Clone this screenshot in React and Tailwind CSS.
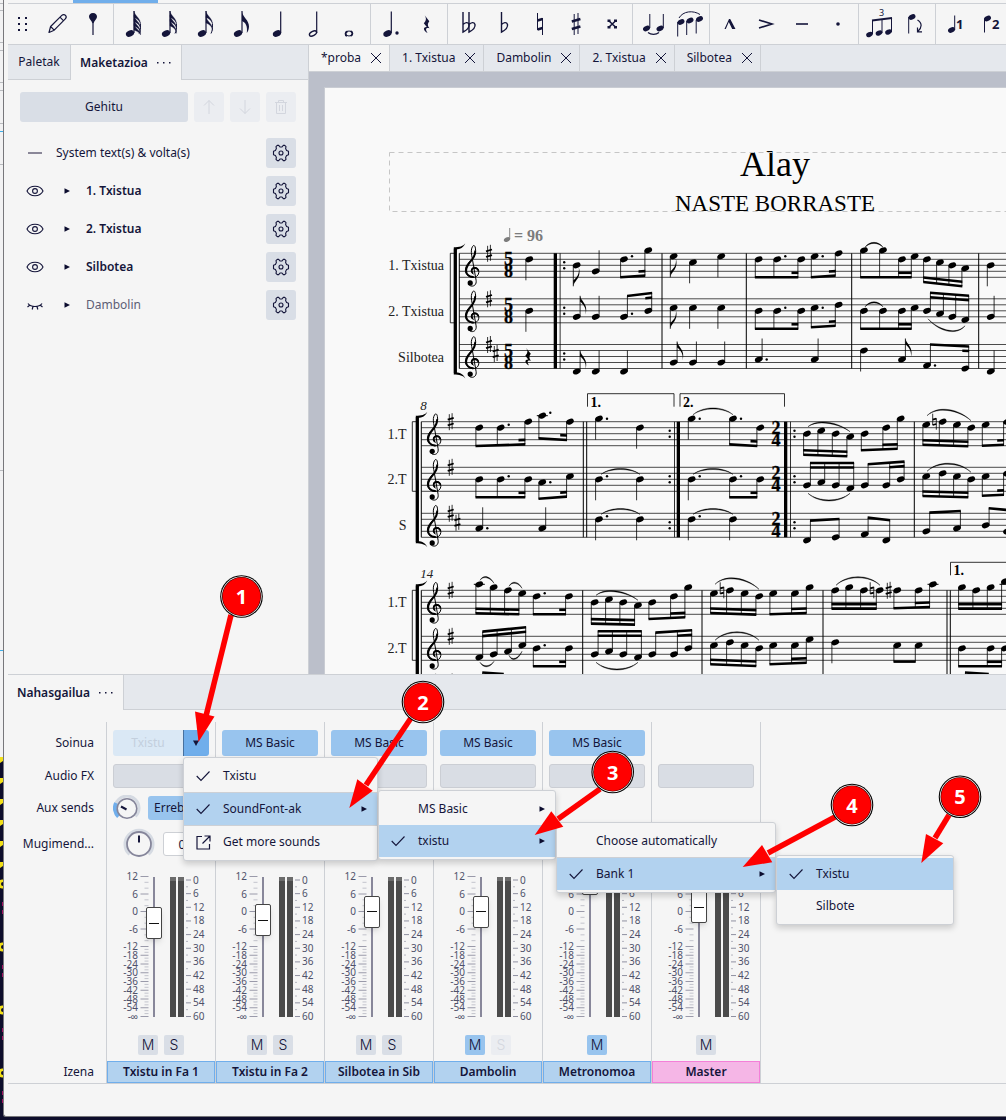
import { useState } from 'react';

const INK = '#14153a';

/* ---------- Toolbar icons (36 x 40 cells) ---------- */

const Head = ({ x, y, s = 1 }) => (
  <ellipse cx={x} cy={y} rx={4.3 * s} ry={3 * s} transform={`rotate(-24 ${x} ${y})`} fill="currentColor" />
);

const Cell = ({ children }) => (
  <svg width="36" height="40" viewBox="0 0 36 40" fill="none" stroke="none" className="block">
    {children}
  </svg>
);

const FlagNote = ({ flags }) => (
  <Cell>
    <Head x={14} y={29.5} />
    <path d="M18 7V29" stroke="currentColor" strokeWidth="1.2" />
    {Array.from({ length: flags }, (_, i) => {
      const y = 7 + i * (flags === 2 ? 5.5 : 4.2);
      const end = Math.min(y + 14, 31);
      return flags === 1 ? (
        <path key={i} d="M18 7.5C18.5 13 25 16 25 22.5C25 25 24 27.500 22.8 29C23.8 22 21.5 18.5 18 17Z" fill="currentColor" />
      ) : (
        <path
          key={i}
          d={`M18 ${y}C18.5 ${y + 5} 25 ${y + 7} 24.6 ${end}C24 ${y + 9.5} 21 ${y + 7.5} 18 ${y + 6.5}Z`}
          fill="currentColor"
          stroke="currentColor"
          strokeWidth=".3"
        />
      );
    })}
    {flags > 1 && <path d="M24.4 20C24.8 25 24 27.5 23 29.5" stroke="currentColor" strokeWidth="1" />}
  </Cell>
);

const flatPath = (x) => `M${x} 8V28C${x + 4} 26 ${x + 6.5} 23 ${x + 6} 20.5C${x + 5} 17.5 ${x + 2} 18.5 ${x} 20.5`;

const toolGroups = [
  [
    {
      name: 'Pencil',
      icon: (
        <Cell>
          <path
            d="M10 28.5L11.600 22.5L22.800 11.400C24 10.200 25.600 10.400 26.5 11.400C27.400 12.400 27.400 13.800 26.300 14.900L15.200 26.200L10 28.5ZM21 13.200L24.600 16.800M11.600 22.5L15.200 26.200"
            stroke="currentColor"
            strokeWidth="1.2"
            strokeLinejoin="round"
          />
        </Cell>
      ),
    },
    {
      name: 'Pin',
      icon: (
        <Cell>
          <path d="M18 9C20.600 9 22.200 10.800 22 13C21.800 15.200 19.200 16.5 18.600 19.5V31H17.400V19.5C16.800 16.5 14.200 15.200 14 13C13.800 10.800 15.400 9 18 9Z" fill="currentColor" />
        </Cell>
      ),
    },
  ],
  [
    { name: '64th', icon: <FlagNote flags={4} /> },
    { name: '32nd', icon: <FlagNote flags={3} /> },
    { name: '16th', icon: <FlagNote flags={2} /> },
    { name: '8th', icon: <FlagNote flags={1} /> },
    {
      name: 'Quarter',
      icon: (
        <Cell>
          <Head x={17} y={29.5} />
          <path d="M20.7 7.5V29" stroke="currentColor" strokeWidth="1.2" />
        </Cell>
      ),
    },
    {
      name: 'Half',
      icon: (
        <Cell>
          <ellipse cx="17" cy="29.5" rx="3.9" ry="2.1" transform="rotate(-28 17 29.5)" stroke="currentColor" strokeWidth="1.3" />
          <path d="M20.7 7.5V29" stroke="currentColor" strokeWidth="1.2" />
        </Cell>
      ),
    },
    {
      name: 'Whole',
      icon: (
        <Cell>
          <ellipse cx="17" cy="29.5" rx="3.4" ry="2.5" stroke="currentColor" strokeWidth="1" />
          <path d="M15.400 27.5C13.200 28 12.800 31 15 32M18.600 27.200C21 28 21 31 18.600 32" stroke="currentColor" strokeWidth="1.8" />
        </Cell>
      ),
    },
  ],
  [
    {
      name: 'Dot',
      icon: (
        <Cell>
          <Head x={14.5} y={29.5} />
          <path d="M18.3 7.5V29" stroke="currentColor" strokeWidth="1.2" />
          <circle cx="24" cy="29" r="1.7" fill="currentColor" />
        </Cell>
      ),
    },
    {
      name: 'Rest',
      icon: (
        <Cell>
          <path d="M15.5 11L20.300 17.200C18.5 19.5 18.200 21.5 20.5 24.300C17.5 23.300 15.600 24.600 18.600 29C14.5 27 13.300 22.800 17.800 23L14.800 19.200C17.5 16.5 17.5 14 15.5 11Z" fill="currentColor" />
        </Cell>
      ),
    },
  ],
  [
    {
      name: 'Double flat',
      icon: (
        <Cell>
          <path d={flatPath(13)} stroke="currentColor" strokeWidth="1.4" />
          <path d={flatPath(19)} stroke="currentColor" strokeWidth="1.4" />
        </Cell>
      ),
    },
    {
      name: 'Flat',
      icon: (
        <Cell>
          <path d={flatPath(15.5)} stroke="currentColor" strokeWidth="1.4" />
        </Cell>
      ),
    },
    {
      name: 'Natural',
      icon: (
        <Cell>
          <path d="M15.5 9V26M20.5 14V31" stroke="currentColor" strokeWidth="1" />
          <path d="M15.5 16.5L20.5 15M15.5 25.5L20.5 24" stroke="currentColor" strokeWidth="2.4" />
        </Cell>
      ),
    },
    {
      name: 'Sharp',
      icon: (
        <Cell>
          <path d="M16.2 10V31M20 9V30" stroke="currentColor" strokeWidth="1" />
          <path d="M13.800 17.5L22.400 15M13.800 25L22.400 22.5" stroke="currentColor" strokeWidth="2.4" />
        </Cell>
      ),
    },
    {
      name: 'Double sharp',
      icon: (
        <Cell>
          <path d="M14.5 16.5L22 23.5M22 16.5L14.5 23.5" stroke="currentColor" strokeWidth="1.6" />
          <path d="M13.5 15.5H16.5V18H13.5ZM20 15.5H23V18H20ZM13.5 22H16.5V24.5H13.5ZM20 22H23V24.5H20Z" fill="currentColor" />
        </Cell>
      ),
    },
  ],
  [
    {
      name: 'Tie',
      icon: (
        <Cell>
          <Head x={11.5} y={24.5} s={0.85} />
          <Head x={25} y={24.5} s={0.85} />
          <path d="M14.8 10V24M28.3 10V24" stroke="currentColor" strokeWidth="1" />
          <path d="M13 28.5C16 31 21 31 24 28.5" stroke="currentColor" strokeWidth="1.2" />
        </Cell>
      ),
    },
    {
      name: 'Slur',
      icon: (
        <Cell>
          <Head x={10} y={18} s={0.85} />
          <Head x={19} y={16.5} s={0.85} />
          <Head x={28.5} y={15} s={0.85} />
          <path d="M6.7 18V32.5M15.7 17V31M25.2 16V29.5" stroke="currentColor" strokeWidth="1" />
          <path d="M8 14C12 7 22 6 29 10.5" stroke="currentColor" strokeWidth="1" />
        </Cell>
      ),
    },
  ],
  [
    { name: 'Marcato', icon: <Cell><path d="M12.5 25L17 15H18.2L23.5 25H20.2L16.8 18L13.8 25Z" fill="currentColor" /></Cell> },
    { name: 'Accent', icon: <Cell><path d="M11 16L24 20L11 24" stroke="currentColor" strokeWidth="1.6" /></Cell> },
    { name: 'Tenuto', icon: <Cell><path d="M12 20H24" stroke="currentColor" strokeWidth="1.6" /></Cell> },
    { name: 'Staccato', icon: <Cell><circle cx="18" cy="20" r="1.8" fill="currentColor" /></Cell> },
  ],
  [
    {
      name: 'Tuplet',
      icon: (
        <Cell>
          <Head x={8.5} y={30.5} s={0.8} />
          <Head x={18} y={29} s={0.8} />
          <Head x={27.5} y={28} s={0.8} />
          <path d="M11.5 16.5V30M21 15.5V29M30.5 14V28" stroke="currentColor" strokeWidth="1" />
          <path d="M11 16.5L31 14" stroke="currentColor" strokeWidth="2" />
          <text x="18" y="12" fontSize="9" fill="currentColor">3</text>
        </Cell>
      ),
    },
    {
      name: 'Flip',
      icon: (
        <Cell>
          <Head x={15} y={13} s={0.85} />
          <path d="M11.7 13V29.5" stroke="currentColor" strokeWidth="1" />
          <path d="M20.5 16C25.5 19 25 24 20.8 27.5M20.5 23.5V27.8H25" stroke="currentColor" strokeWidth="1.2" />
        </Cell>
      ),
    },
  ],
  [
    {
      name: 'Voice 1',
      icon: (
        <Cell>
          <Head x={13.5} y={26} s={0.85} />
          <path d="M16.7 11.5V26" stroke="currentColor" strokeWidth="1" />
          <text x="18" y="25" fontSize="13" fontWeight="700" fill="currentColor">1</text>
        </Cell>
      ),
    },
    {
      name: 'Voice 2',
      icon: (
        <Cell>
          <Head x={13.5} y={14.5} s={0.85} />
          <path d="M10.5 15V28.5" stroke="currentColor" strokeWidth="1" />
          <text x="18" y="25" fontSize="13" fontWeight="700" fill="currentColor">2</text>
        </Cell>
      ),
    },
  ],
];

const Toolbar = () => (
  <div className="flex h-[41px] shrink-0 overflow-hidden border-b border-[#cdd0d5]">
    {toolGroups.map((group, i) => (
      <div key={i} className="flex shrink-0 items-center border-r border-[#cdd0d5] px-0.5 last:border-r-0">
        {i === 0 && (
          <div className="flex w-[29px] justify-center pr-1">
            <svg width="12" height="16" viewBox="0 0 12 16" fill={INK}>
              {[1, 7, 13].map((y) => [1, 8].map((x) => <rect key={`${x}-${y}`} x={x} y={y} width="2" height="2" />))}
            </svg>
          </div>
        )}
        {group.map((tool) => (
          <button key={tool.name} aria-label={tool.name}>
            {tool.icon}
          </button>
        ))}
      </div>
    ))}
  </div>
);

/* ---------- Instruments panel ---------- */

const Dots = () => (
  <svg width="16" height="4" viewBox="0 0 16 4" fill={INK}>
    <rect x="1" y="1" width="1.5" height="1.5" />
    <rect x="7" y="1" width="1.5" height="1.5" />
    <rect x="13" y="1" width="1.5" height="1.5" />
  </svg>
);

const Gear = () => (
  <svg width="18" height="18" viewBox="0 0 18 18" fill="none" stroke={INK} strokeWidth="1.1" strokeLinejoin="round">
    <path d="M5.300 1.400H6.700L8 3H10L11.300 1.400H12.700L14 2.600L13.600 4.600L14.600 6.400L16.5 7.200V10.800L14.600 11.600L13.600 13.400L14 15.400L12.700 16.600H11.300L10 15H8L6.700 16.600H5.300L4 15.400L4.400 13.400L3.400 11.600L1.5 10.800V7.200L3.400 6.400L4.400 4.600L4 2.600Z" />
    <circle cx="9" cy="9" r="2" />
  </svg>
);

const Eye = () => (
  <svg width="18" height="12" viewBox="0 0 18 12" fill="none" stroke={INK} strokeWidth="1.1">
    <path d="M1 6C4 -0.3 14 -0.3 17 6C14 12.3 4 12.3 1 6Z" />
    <circle cx="9" cy="6" r="2.4" />
  </svg>
);

const EyeClosed = () => (
  <svg width="18" height="12" viewBox="0 0 18 12" fill="none" stroke={INK} strokeWidth="1.2">
    <path d="M2 4.5C5 8.5 13 8.5 16 4.5M4 6L1.5 8M14 6L16.5 8M7 7.5L6.2 10.5M11 7.5L11.8 10.5" />
  </svg>
);

const Triangle = () => (
  <svg width="6" height="6" viewBox="0 0 6 6" fill="#0b0c2e">
    <path d="M0.5 0.2L6 3L0.5 5.8Z" />
  </svg>
);

const instruments = [
  { name: '1. Txistua', visible: true },
  { name: '2. Txistua', visible: true },
  { name: 'Silbotea', visible: true },
  { name: 'Dambolin', visible: false },
];

const iconButton = 'flex size-[30px] shrink-0 items-center justify-center rounded-[3px]';

const GearButton = ({ label }) => (
  <button aria-label={label} className={`${iconButton} bg-[#d9dee6]`}>
    <Gear />
  </button>
);

const InstrumentsPanel = () => (
  <aside className="flex w-[301px] shrink-0 flex-col border-r border-[#cdd0d5]">
    <div className="flex h-[35px]">
      <button className="w-[63px] border-r border-b border-[#cdd0d5] bg-[#e5e8ed]">Paletak</button>
      <div className="flex w-[110px] items-center justify-center gap-2">
        <button className="font-semibold">Maketazioa</button>
        <button aria-label="Panel menu">
          <Dots />
        </button>
      </div>
      <div className="flex-1 border-b border-l border-[#cdd0d5] bg-[#e5e8ed]" />
    </div>
    <div className="flex flex-col p-3">
      <div className="mb-4 flex gap-1.5">
        <button className="h-[30px] flex-1 rounded-[3px] bg-[#d9dee6]">Gehitu</button>
        <button disabled aria-label="Move up" className={`${iconButton} bg-[#ebedf1]`}>
          <svg width="14" height="16" viewBox="0 0 14 16" fill="none" stroke="#d3d6de"><path d="M7 15V1.5M2 6.5L7 1.5L12 6.5" /></svg>
        </button>
        <button disabled aria-label="Move down" className={`${iconButton} bg-[#ebedf1]`}>
          <svg width="14" height="16" viewBox="0 0 14 16" fill="none" stroke="#d3d6de"><path d="M7 1V14.5M2 9.5L7 14.5L12 9.5" /></svg>
        </button>
        <button disabled aria-label="Delete" className={`${iconButton} bg-[#ebedf1]`}>
          <svg width="14" height="16" viewBox="0 0 14 16" fill="none" stroke="#d3d6de"><path d="M1 3.5H13M4.5 3.5V1.5H9.5V3.5M2.5 3.5V14.5H11.5V3.5M5.5 6V12M8.5 6V12" /></svg>
        </button>
      </div>
      <ul className="flex flex-col gap-2">
        <li className="flex h-[30px] items-center">
          <span className="mr-3.5 ml-2 h-0.5 w-3.5 bg-[#8a8798]" />
          <span className="flex-1">System text(s) &amp; volta(s)</span>
          <GearButton label="System settings" />
        </li>
        {instruments.map((item) => (
          <li key={item.name} className="flex h-[30px] items-center">
            <button aria-label={`Visibility ${item.name}`} className="ml-1.5">
              {item.visible ? <Eye /> : <EyeClosed />}
            </button>
            <button aria-label={`Expand ${item.name}`} className="mr-4 ml-5">
              <Triangle />
            </button>
            <span className={item.visible ? 'flex-1 font-semibold' : 'flex-1 text-[#5d5e75]'}>{item.name}</span>
            <GearButton label={`${item.name} settings`} />
          </li>
        ))}
      </ul>
    </div>
  </aside>
);

/* ---------- Score ---------- */

// Single notes: [direction, x, position, modifiers]   f = flag, . = dot
// Beams:        [direction, [[x, position, dot], ...], y0, y1, second beam]
// second beam: 's' = stub on the last note, [i, j] = from note i to note j
const systems = [
  {
    left: 459.3,
    label: 444,
    keyX: 489,
    clefX: 464.5,
    time: { x: 508.5, top: '5', bottom: '8' },
    bars: [662, 746.3, 851.7, 978.7],
    starts: [553.7],
    staves: [
      {
        y: 253.3,
        name: '1. Txistua',
        sharps: 1,
        notes: [
          ['d', 529.3, 2], ['d', 576.7, 4, 'f'], ['u', 595.7, 6], ['d', 673.7, 1, 'f'], ['d', 693, 3], ['d', 721.3, 1], ['d', 990.7, 4],
        ],
        beams: [
          ['d', [[624, 2, 1], [648.3, -1]], 24, 22.3, 's'],
          ['d', [[758.7, 2], [777.3, 2, 1], [801.3, 2]], 24, 24, 's'],
          ['d', [[814.7, 1, 1], [838.7, 0]], 24, 22.3, 's'],
          ['d', [[864, -1], [883, -1], [902, 2], [914.7, 1]], 24, 24, [2, 3]],
          ['d', [[927, 2], [940, 3], [952.3, 4], [965.3, 5]], 28.7, 33, [0, 3]],
        ],
        slurs: [[865, -6, 883, -6, -5]],
      },
      {
        y: 298.8,
        name: '2. Txistua',
        sharps: 1,
        notes: [
          ['d', 529.3, 4], ['u', 576.7, 6, 'f'], ['u', 595.7, 6], ['d', 673.7, 3, 'f'], ['d', 693, 3], ['d', 721.3, 3], ['u', 990.7, 6],
        ],
        beams: [
          ['u', [[624, 6, 1], [648.3, 4]], -2.8, -5.8, 's'],
          ['d', [[758.7, 4], [777.3, 4, 1], [801.3, 4]], 30, 30, 's'],
          ['d', [[814.7, 3, 1], [838.7, 2]], 28.5, 27, 's'],
          ['d', [[864, 4], [883, 4], [902, 4], [914.7, 3]], 30, 30, [2, 3]],
          ['u', [[927, 4], [940, 5], [952.3, 6], [965.3, 7]], -6, -3, [0, 3]],
        ],
        slurs: [[865, 8, 883, 8, -5], [928, 20, 965, 27, 9]],
      },
      {
        y: 344.5,
        name: 'Silbotea',
        sharps: 2,
        rest: 528,
        notes: [
          ['u', 576.7, 9, 'f'], ['u', 595.7, 9], ['u', 624, 9], ['u', 673.7, 6, 'f'], ['u', 693, 6], ['u', 721.3, 6],
          ['u', 758.7, 5, '.'], ['u', 814.7, 5], ['d', 864, 2], ['u', 902, 5, 'f'], ['u', 990.7, 9],
        ],
        beams: [['u', [[927, 7, 1], [965.3, 8]], 0, 2, 's']],
      },
    ],
  },
  {
    left: 421.3,
    label: 406.5,
    keyX: 450.7,
    clefX: 426.5,
    number: '8',
    bars: [583.3, 586.7, 914.3],
    ends: [680],
    starts: [784],
    midTime: { x: 776, top: '2', bottom: '4' },
    voltas: [[587.5, 674, 393.7, '1.', 1], [680, 784.5, 393.7, '2.', 1]],
    staves: [
      {
        y: 421.7,
        name: '1.T',
        sharps: 1,
        notes: [['d', 599, -1, '.'], ['d', 640, 2], ['d', 691.7, -1, '.']],
        beams: [
          ['d', [[479.3, 2], [500.7, 2, 1], [528.3, 0]], 24.3, 22.7, 's'],
          ['d', [[542.3, -2, 1], [570, 0]], 16.7, 18.3, 's'],
          ['d', [[733, -1, 1], [760.3, 2]], 22.7, 24.3, 's'],
          ['d', [[807, 4], [821.3, 3], [835.7, 4], [850.3, 5]], 33, 34.5, [0, 3]],
          ['d', [[864.7, 4], [886.3, 2], [900.7, -1]], 28.5, 27, [1, 2]],
          ['d', [[926.3, 1], [942.7, 0], [957, 1], [971.3, 2]], 23, 24.5, [0, 3]],
          ['d', [[985.7, 1], [1007, 0]], 24, 23, 's'],
        ],
        slurs: [[693, -7, 733, -7, -7], [808, 5, 850, 10, -7], [927, -6, 971, -1, -9]],
        naturals: [[934.5, 0]],
      },
      {
        y: 467.3,
        name: '2.T',
        sharps: 1,
        notes: [['d', 599, 4, '.'], ['d', 640, 4], ['d', 691.7, 4, '.']],
        beams: [
          ['d', [[479.3, 4], [500.7, 4, 1], [528.3, 4]], 30, 30, 's'],
          ['d', [[542.3, 5, 1], [570, 3]], 31.5, 29.3, 's'],
          ['d', [[733, 4, 1], [760.3, 4]], 30, 30, 's'],
          ['u', [[807, 6], [821.3, 5], [835.7, 6], [850.3, 7]], -4.3, -4.3, [0, 3]],
          ['u', [[864.7, 6], [886.3, 6], [900.7, 4]], -3, -5.7, [1, 2]],
          ['d', [[926.3, 3], [942.7, 2], [957, 3], [971.3, 4]], 28.7, 30, [0, 3]],
          ['d', [[985.7, 3], [1007, 2]], 28.5, 27.5, 's'],
        ],
        slurs: [[601, 7, 640, 7, -6], [693, 7, 733, 7, -6], [808, 26, 850, 26, 8], [927, 4, 971, 5, -9]],
      },
      {
        y: 513.3,
        name: 'S',
        sharps: 2,
        notes: [
          ['u', 479.3, 5, '.'], ['u', 542.3, 5], ['d', 599, 2, '.'], ['d', 640, 2], ['d', 691.7, 2, '.'], ['d', 733, 2],
        ],
        beams: [
          ['u', [[807, 9], [835.7, 8]], 7.3, 5.7],
          ['u', [[864.7, 7], [886.3, 9]], 4.3, 7],
          ['u', [[926.3, 6], [957, 5]], -0.7, -2.3],
          ['u', [[985.7, 4], [1007, 6]], -5, -3],
        ],
        slurs: [[601, 1, 640, 1, -6], [693, 1, 733, 1, -6]],
      },
    ],
  },
  {
    left: 421.3,
    label: 406.5,
    keyX: 450.7,
    clefX: 426.5,
    number: '14',
    bars: [582.7, 702, 823, 947, 950.3],
    voltas: [[950.5, 1020, 562.3, '1.', 0]],
    staves: [
      {
        y: 590.3,
        name: '1.T',
        sharps: 1,
        notes: [],
        beams: [
          ['d', [[479.3, -2], [493.7, -1], [508, 0], [522.3, 1]], 23, 24, [0, 3]],
          ['d', [[536.7, 2, 1], [569, 2]], 24, 24, 's'],
          ['d', [[594.7, 4], [609, 3], [623.3, 4], [638, 5]], 33.3, 34.3, [0, 3]],
          ['d', [[652.3, 4], [674, 2], [688.3, -1]], 28.7, 27, [1, 2]],
          ['d', [[714, 1], [730, 0], [744.7, 1], [759.3, 2]], 22.7, 24.3, [0, 3]],
          ['d', [[773.3, 1], [795, 1], [809.7, -1]], 24, 22.7, [1, 2]],
          ['d', [[835.3, 0], [849.3, -1], [864, 0], [879.7, 0]], 18.3, 18.3, [0, 3]],
          ['d', [[897.3, 0], [918.7, 0], [933, -2]], 18, 16.7, [1, 2]],
          ['d', [[962, -1], [976.3, 0], [990.7, -1], [1005, -3]], 18.3, 18.3, [0, 3]],
        ],
        slurs: [
          [480, -10, 494, -7, -5], [509, -4, 522, -2, -5], [596, 5, 638, 10, -7], [715, -6, 759, -1, -9], [836, -5, 880, -5, -9],
        ],
        naturals: [[722, 0], [872, 0]],
        accSharps: [[888.7, 0]],
      },
      {
        y: 636.3,
        name: '2.T',
        sharps: 1,
        notes: [['d', 835.3, 2]],
        beams: [
          ['u', [[479.3, 7], [493.7, 6], [508, 5], [522.3, 3]], -4.7, -9, [0, 3]],
          ['d', [[536.7, 4, 1], [569, 4]], 30, 30, 's'],
          ['u', [[594.7, 6], [609, 5], [623.3, 6], [638, 7]], -5, -5, [0, 3]],
          ['u', [[652.3, 6], [674, 6], [688.3, 4]], -3.7, -6, [1, 2]],
          ['d', [[714, 3], [730, 2], [744.7, 3], [759.3, 4]], 28, 29.7, [0, 3]],
          ['d', [[773.3, 3], [795, 3], [809.7, 1]], 28, 26.5, [1, 2]],
          ['d', [[897.3, 3], [918.7, 3]], 25.3, 25.3],
          ['d', [[962, 4], [990.7, 4], [1005, 4]], 30, 30, [1, 2]],
        ],
        slurs: [[480, 26, 494, 25, 5], [509, 19, 522, 15, 6], [596, 26, 638, 26, 8], [715, 4, 759, 4, -9]],
      },
      {
        y: 682,
        name: '',
        sharps: 2,
        notes: [],
        beams: [
          ['u', [[479.3, 7], [500, 8]], -9.5, -8],
          ['u', [[962, 7], [985, 8]], -9.5, -8],
        ],
      },
    ],
  },
];

const NoteHead = ({ x, y, p }) => (
  <>
    <ellipse cx={x} cy={y} rx="4" ry="2.7" transform={`rotate(-24 ${x} ${y})`} />
    {p <= -2 && <path d={`M${x - 5.5} ${y + (p % 2 ? 3 : 0)}h11`} stroke="#000" strokeWidth="1" />}
  </>
);

const Clef = ({ x, y }) => (
  <g transform={`translate(${x} ${y})`} fill="none" stroke="#000" strokeLinecap="round">
    <path
      d="M8.8 20.7C5.7 19.5 6.2 14 10 14C13.2 14 14.7 17 14.3 19.4C13.8 22.8 11 24.2 8.3 24.1C4 24 .8 21 .9 16.8C1.2 11 5.5 8.5 8.3 4.7C10.7 1.5 11.6 -2 10.9 -5.2C10.5 -7.8 9.2 -8.6 8.2 -7C6.7 -4.8 6.5 -2 7.2 2L11.6 27C12.2 31 9.8 33 7.2 32.8C5 32.6 3.8 31 4 29.5"
      strokeWidth="1"
    />
    <path d="M8.5 23.7C4.4 23.4 1.6 20.8 1.6 17C1.8 12.4 5.4 9.2 8 5.7C9.8 3.2 10.6 1 10.7 -2" strokeWidth="2" />
    <path d="M8 19.5C6.5 17.5 7.2 14.8 10 14.5C12 14.5 13.2 15.6 13.7 17" strokeWidth="1.8" />
    <circle cx="5.7" cy="29.6" r="2.6" fill="#000" stroke="none" />
  </g>
);

const SharpSign = ({ x, y }) => (
  <g stroke="#000">
    <path d={`M${x - 1.4} ${y - 7.5}v16M${x + 1.4} ${y - 8.5}v16`} strokeWidth=".8" />
    <path d={`M${x - 3} ${y - 2}l6 -1.8M${x - 3} ${y + 3.6}l6 -1.8`} strokeWidth="1.8" />
  </g>
);

const NaturalSign = ({ x, y }) => (
  <g stroke="#000">
    <path d={`M${x - 1.8} ${y - 8}v11.5M${x + 1.8} ${y - 3.5}v11.5`} strokeWidth=".8" />
    <path d={`M${x - 1.8} ${y - 2}l3.6 -1M${x - 1.8} ${y + 3.3}l3.6 -1`} strokeWidth="1.8" />
  </g>
);

const Rest = ({ x, y }) => (
  <path
    transform={`translate(${x - 17.5} ${y - 20})`}
    d="M15.5 11.5L20.3 17.2C18.5 19.5 18.2 21.5 20.5 24.3C17.5 23.3 15.6 24.6 18.6 29C14.5 27 13.3 22.8 17.8 23L14.8 19.2C17.5 16.5 17.5 14 15.5 11.5Z"
  />
);

const Slur = ({ data: [x0, y0, x1, y1, h], top }) => {
  const a = x0 + (x1 - x0) * 0.25;
  const b = x0 + (x1 - x0) * 0.75;
  const s = h > 0 ? 1 : -1;
  const c = (y, k) => top + y + h * 1.2 + k;
  return (
    <path
      d={`M${x0} ${top + y0}C${a} ${c(y0, s * 0.6)} ${b} ${c(y1, s * 0.6)} ${x1} ${top + y1}C${b} ${c(y1, -s * 0.8)} ${a} ${c(y0, -s * 0.8)} ${x0} ${top + y0}Z`}
      stroke="#000"
      strokeWidth=".4"
    />
  );
};

const Note = ({ data: [dir, x, p, mod = ''], top }) => {
  const y = top + p * 3;
  const sx = dir === 'd' ? x - 3.4 : x + 3.4;
  const k = dir === 'd' ? 1 : -1;
  const end = y + 21 * k;
  return (
    <g>
      <NoteHead x={x} y={y} p={p} />
      <path d={`M${sx} ${y}V${end}`} stroke="#000" strokeWidth=".8" />
      {mod.includes('f') && (
        <path d={`M${sx} ${end}C${sx + 1} ${end - 6 * k} ${sx + 8.5} ${end - 8 * k} ${sx + 5.5} ${end - 19 * k}C${sx + 6.5} ${end - 12 * k} ${sx + 3} ${end - 8 * k} ${sx} ${end - 6 * k}Z`} />
      )}
      {mod.includes('.') && <circle cx={x + 8} cy={p % 2 ? y : y - 3} r="1.2" />}
    </g>
  );
};

const Beam = ({ data: [dir, notes, y0, y1, sub], top }) => {
  const off = dir === 'd' ? -3.4 : 3.4;
  const x0 = notes[0][0] + off;
  const x1 = notes[notes.length - 1][0] + off;
  const at = (x) => top + y0 + ((y1 - y0) * (x - x0)) / (x1 - x0);
  const bar = (a, b, d) => {
    const ya = at(a) + d;
    const yb = at(b) + d;
    return <path d={`M${a - 0.4} ${ya - 1.3}L${b + 0.4} ${yb - 1.3}V${yb + 1.3}L${a - 0.4} ${ya + 1.3}Z`} />;
  };
  const d = dir === 'd' ? -4.5 : 4.5;
  return (
    <g>
      {notes.map(([x, p, dot]) => (
        <g key={x}>
          <NoteHead x={x} y={top + p * 3} p={p} />
          <path d={`M${x + off} ${top + p * 3}V${at(x + off)}`} stroke="#000" strokeWidth=".8" />
          {dot && <circle cx={x + 8} cy={top + p * 3 - (p % 2 ? 0 : 3)} r="1.2" />}
        </g>
      ))}
      {bar(x0, x1, 0)}
      {sub === 's' && bar(x1 - 6, x1, d)}
      {Array.isArray(sub) && bar(notes[sub[0]][0] + off, notes[sub[1]][0] + off, d)}
    </g>
  );
};

const TimeSig = ({ x, y, top, bottom }) => (
  <g fontSize="18" fontWeight="700" textAnchor="middle" stroke="#000" strokeWidth=".3">
    <text x={x} y={y + 12}>{top}</text>
    <text x={x} y={y + 24}>{bottom}</text>
  </g>
);

const System = ({ sys }) => {
  const { staves, left } = sys;
  const top = staves[0].y;
  const bottom = staves[2].y + 24;
  return (
    <g>
      {staves.map((st) => (
        <g key={st.y}>
          {[0, 6, 12, 18, 24].map((d) => (
            <path key={d} d={`M${left} ${st.y + d}H1030`} stroke="#000" strokeWidth=".7" />
          ))}
          <Clef x={sys.clefX} y={st.y} />
          <SharpSign x={sys.keyX} y={st.y} />
          {st.sharps === 2 && <SharpSign x={sys.keyX + 6.7} y={st.y + 9} />}
          {sys.time && <TimeSig {...sys.time} y={st.y} />}
          {sys.midTime && <TimeSig {...sys.midTime} y={st.y} />}
          {st.rest && <Rest x={st.rest} y={st.y + 12} />}
          <text x={sys.label} y={st.y + 17} fontSize="14" textAnchor="end" fill="#222">{st.name}</text>
          {st.notes.map((n) => <Note key={n[1]} data={n} top={st.y} />)}
          {st.beams.map((b) => <Beam key={b[1][0][0]} data={b} top={st.y} />)}
          {(st.slurs || []).map((s) => <Slur key={s[0]} data={s} top={st.y} />)}
          {(st.naturals || []).map(([x, p]) => <NaturalSign key={x} x={x} y={st.y + p * 3} />)}
          {(st.accSharps || []).map(([x, p]) => <SharpSign key={x} x={x} y={st.y + p * 3} />)}
          {(sys.starts || []).map((x) => (
            <g key={x}>
              <circle cx={x + 10.5} cy={st.y + 9} r="1.2" />
              <circle cx={x + 10.5} cy={st.y + 15} r="1.2" />
            </g>
          ))}
          {(sys.ends || []).map((x) => (
            <g key={x}>
              <circle cx={x - 10.3} cy={st.y + 9} r="1.2" />
              <circle cx={x - 10.3} cy={st.y + 15} r="1.2" />
            </g>
          ))}
        </g>
      ))}
      {sys.bars.map((x) => <path key={x} d={`M${x} ${top}V${bottom}`} stroke="#000" strokeWidth="1" />)}
      {(sys.starts || []).map((x) => (
        <path key={x} d={`M${x} ${top}h3.3V${bottom}h-3.3ZM${x + 6} ${top}h.8V${bottom}h-.8Z`} />
      ))}
      {(sys.ends || []).map((x) => (
        <path key={x} d={`M${x} ${top}h-3.3V${bottom}h3.3ZM${x - 6} ${top}h.8V${bottom}h-.8Z`} />
      ))}
      <path d={`M${left} ${top}V${bottom}`} stroke="#000" strokeWidth="1" />
      <path d={`M${left - 4} ${top - 5}V${bottom + 5}`} stroke="#000" strokeWidth="3.3" />
      <path d={`M${left - 5.6} ${top - 6}C${left} ${top - 6} ${left + 4} ${top - 7} ${left + 6} ${top - 10}C${left + 4} ${top - 5} ${left} ${top - 3.5} ${left - 5} ${top - 4}Z`} />
      <path d={`M${left - 5.6} ${bottom + 6}C${left} ${bottom + 6} ${left + 4} ${bottom + 7} ${left + 6} ${bottom + 10}C${left + 4} ${bottom + 5} ${left} ${bottom + 3.5} ${left - 5} ${bottom + 4}Z`} />
      <path d={`M${left - 4} ${top}H${left - 9}V${staves[1].y + 24}h5`} fill="none" stroke="#000" strokeWidth=".8" />
      {sys.number && <text x={left - 1} y={top - 12} fontSize="13" fontStyle="italic" fill="#222">{sys.number}</text>}
      {(sys.voltas || []).map(([x0, x1, y, label, closed]) => (
        <g key={x0}>
          <path d={`M${x0} ${y + 13}V${y}H${x1}${closed ? 'v13' : ''}`} fill="none" stroke="#000" strokeWidth=".8" />
          <text x={x0 + 3} y={y + 13} fontSize="14" fontWeight="700">{label}</text>
        </g>
      ))}
    </g>
  );
};

const Score = () => (
  <svg width="700" height="470" viewBox="325 212 700 470" fill="#000" fontFamily="'Liberation Serif', serif" className="block">
    <g fill="#7c7c7c">
      <ellipse cx="507" cy="239.5" rx="3.3" ry="2.3" transform="rotate(-24 507 239.5)" />
      <path d="M509.7 228V239" stroke="#7c7c7c" strokeWidth=".9" />
      <text x="514" y="241" fontSize="16" fontWeight="700">= 96</text>
    </g>
    {systems.map((sys) => (
      <System key={sys.staves[0].y} sys={sys} />
    ))}
  </svg>
);

const scoreTabs = ['*proba', '1. Txistua', 'Dambolin', '2. Txistua', 'Silbotea'];

const ScoreView = () => {
  const [active, setActive] = useState('*proba');
  return (
    <main className="flex min-w-0 flex-1 flex-col">
      <div className="flex h-[27px] shrink-0 bg-[#e5e8ed]">
        {scoreTabs.map((tab) => (
          <div
            key={tab}
            className={`flex items-center gap-2.5 border-r border-b border-[#cdd0d5] pr-2 pl-3 ${tab === active ? 'bg-[#f5f5f5]' : ''}`}
          >
            <button onClick={() => setActive(tab)}>{tab}</button>
            <button aria-label={`Close ${tab}`}>
              <svg width="10" height="10" viewBox="0 0 10 10" stroke={INK}><path d="M0 0L10 10M10 0L0 10" /></svg>
            </button>
          </div>
        ))}
        <div className="flex-1 border-b border-[#cdd0d5]" />
      </div>
      <div className="min-h-0 flex-1 overflow-hidden bg-[#bbbfca] pt-[15px] pl-[15px]">
        <div className="border-t border-l border-[#c9ccd3] bg-[#f9f9f9] pt-16">
          <header className="relative ml-16 flex h-[60px] w-[772px] flex-col items-center justify-between font-['Liberation_Serif',serif] text-black">
            <svg className="absolute inset-0" width="772" height="60" fill="none" stroke="#c6c6c6">
              <rect x=".5" y=".5" width="771" height="59" strokeDasharray="5 4" />
            </svg>
            <h1 className="text-[36px] leading-6">Alay</h1>
            <h2 className="text-[23px] leading-4">NASTE BORRASTE</h2>
          </header>
          <Score />
        </div>
      </div>
    </main>
  );
};

/* ---------- Mixer ---------- */

const channels = [
  { name: 'Txistu in Fa 1', sound: 'Txistu', open: true, aux: true, fader: 67, buttons: ['M', 'S'] },
  { name: 'Txistu in Fa 2', sound: 'MS Basic', aux: true, fader: 69, buttons: ['M', 'S'] },
  { name: 'Silbotea in Sib', sound: 'MS Basic', aux: true, fader: 75, buttons: ['M', 'S'] },
  { name: 'Dambolin', sound: 'MS Basic', aux: true, fader: 75, muted: true, buttons: ['M', 'S'] },
  { name: 'Metronomoa', sound: 'MS Basic', fader: 98, muted: true, buttons: ['M'] },
  { name: 'Master', master: true, fader: 78, buttons: ['M'] },
];

const leftLabels = ['12', '6', '0', '-6', '-12', '-18', '-24', '-30', '-36', '-42', '-48', '-54', '-∞'];
const leftY = (i) => (i <= 4 ? 16.5 + i * 17.5 : 86.5 + (i - 4) * 8.75);

const LeftScale = () => (
  <svg width="36" height="175" viewBox="0 0 36 175" className="block overflow-visible" fontSize="10" fill="#4f516a">
    {leftLabels.map((label, i) => (
      <g key={label}>
        <text x="25" y={leftY(i) + 3.5} textAnchor="end">{label}</text>
        <path d={`M27.5 ${leftY(i)}h8`} stroke="#9a9aaa" />
        {i < 12 &&
          [1, 2].map((k) => (
            <path key={k} d={`M31.5 ${leftY(i) + ((leftY(i + 1) - leftY(i)) * k) / 3}h4`} stroke="#c3c4cd" />
          ))}
      </g>
    ))}
  </svg>
);

const RightScale = () => (
  <svg width="22" height="175" viewBox="0 0 22 175" className="block overflow-visible" fontSize="10" fill="#4f516a">
    {Array.from({ length: 11 }, (_, i) => (
      <g key={i}>
        <path d={`M1 ${20 + i * 13.65}h5`} stroke="#8f90a1" />
        {i < 10 && <path d={`M1 ${26.8 + i * 13.65}h2`} stroke="#b4b5c0" />}
        <text x="8" y={23.5 + i * 13.65}>{i * 6}</text>
      </g>
    ))}
  </svg>
);

const Fader = ({ name, value }) => (
  <div className="flex h-[175px] pl-1.5">
    <LeftScale />
    <input
      type="range"
      aria-label={`${name} volume`}
      defaultValue={value}
      className="-ml-[3px] h-full w-4 appearance-none bg-transparent bg-[linear-gradient(#88879a,#88879a)] bg-[length:2px_140px] bg-[position:center_17px] bg-no-repeat [direction:rtl] [writing-mode:vertical-lr] [&::-webkit-slider-thumb]:h-8 [&::-webkit-slider-thumb]:w-4 [&::-webkit-slider-thumb]:appearance-none [&::-webkit-slider-thumb]:rounded-[2px] [&::-webkit-slider-thumb]:border [&::-webkit-slider-thumb]:border-[#444] [&::-webkit-slider-thumb]:bg-white [&::-webkit-slider-thumb]:bg-[linear-gradient(#111,#111)] [&::-webkit-slider-thumb]:bg-[length:10px_1px] [&::-webkit-slider-thumb]:bg-center [&::-webkit-slider-thumb]:bg-no-repeat [&::-webkit-slider-thumb]:shadow-md"
    />
    <div className="mt-[17px] ml-2 flex h-[140px] gap-0.5">
      <div className="w-1.5 border-t-4 border-[#6b6b6b] bg-[#4b4b4b]" />
      <div className="w-1.5 border-t-4 border-[#6b6b6b] bg-[#4b4b4b]" />
    </div>
    <div className="ml-px">
      <RightScale />
    </div>
  </div>
);

const AuxKnob = () => (
  <svg width="28" height="26" viewBox="0 0 28 26" fill="none">
    <path d="M5.5 21.5A12 12 0 1 1 22.5 21.5" stroke="#d5dae2" strokeWidth="3" />
    <path d="M5.5 21.5A12 12 0 0 1 3 8" stroke="#70aeeb" strokeWidth="4" />
    <circle cx="14" cy="13.5" r="9.8" fill="#f5f5f5" stroke="#85859a" strokeWidth="1.6" />
    <path d="M13.5 14.5L8 11.5" stroke={INK} strokeWidth="2" />
  </svg>
);

const PanKnob = () => (
  <svg width="32" height="32" viewBox="0 0 32 32" fill="none">
    <path d="M6.5 26.5A14 14 0 1 1 25.5 26.5" stroke="#d5dae2" strokeWidth="3" />
    <circle cx="16" cy="16" r="12" fill="#f5f5f5" stroke="#85859a" strokeWidth="1.8" />
    <path d="M16 7.5V14.5" stroke={INK} strokeWidth="2" />
  </svg>
);

const Channel = ({ channel }) => {
  const { name, sound, open, aux, fader, muted, master, buttons } = channel;
  return (
    <div className="flex w-[109px] flex-col border-r border-[#cdd0d5] pt-2">
      <div className="mx-1.5 flex h-[26px]">
        {sound && (
          <button
            className={`flex-1 ${open ? 'rounded-l-[3px] bg-[#dae8f5] text-[#c3cfdd]' : 'rounded-[3px] bg-[#98c4ee]'}`}
          >
            {sound}
          </button>
        )}
        {open && (
          <button aria-label="Choose sound" className="flex w-[26px] items-center justify-center rounded-r-[3px] border-l border-[#47719f] bg-[#70aeeb]">
            <svg width="7" height="6" viewBox="0 0 7 6" fill={INK}><path d="M0 .5H6L3 6Z" /></svg>
          </button>
        )}
      </div>
      <button aria-label={`${name} audio FX`} className="mx-1.5 mt-2 h-6 rounded-[3px] border border-[#cbced4] bg-[#d9dde4]" />
      <div className="mx-1.5 mt-2 flex h-6 items-center">
        {aux && (
          <>
            <AuxKnob />
            <button className="ml-[7px] h-6 flex-1 rounded-[3px] bg-[#98c4ee] px-1.5 text-left">Erreb</button>
          </>
        )}
      </div>
      <div className="mt-2 ml-4 flex h-8 items-center gap-2">
        <PanKnob />
        <input aria-label={`${name} pan`} defaultValue="0" className="h-6 w-[38px] rounded-[3px] border border-[#cdd0d5] bg-white text-center" />
      </div>
      <Fader name={name} value={fader} />
      <div className="flex h-5 justify-center gap-1.5">
        {buttons.map((b) => {
          const on = b === 'M' && muted;
          const off = b === 'S' && muted;
          return (
            <button
              key={b}
              aria-pressed={Boolean(on)}
              disabled={off}
              className={`size-5 rounded-[2px] font-['Inter',sans-serif] text-[14px] leading-5 font-light ${
                on ? 'bg-[#98c4ee]' : off ? 'bg-[#ebedf1] text-[#d5d8e0]' : 'bg-[#d9dee6]'
              }`}
            >
              {b}
            </button>
          );
        })}
      </div>
      <div
        className={`mt-1.5 h-[22px] border text-center leading-5 font-semibold ${
          master ? 'border-[#f47fd8] bg-[#f5b6e6]' : 'border-[#70aeeb] bg-[#b2d2ef]'
        }`}
      >
        {name}
      </div>
    </div>
  );
};

const Check = () => (
  <svg width="14" height="12" viewBox="0 0 14 12" fill="none" stroke={INK} strokeWidth="1.1">
    <path d="M.7 6L5 10.5L13.5 1.5" />
  </svg>
);

const External = () => (
  <svg width="15" height="15" viewBox="0 0 15 15" fill="none" stroke={INK} strokeWidth="1.2">
    <path d="M6 1.5H1V14H13.5V9M8.5 1H14V6.5M14 1L6.5 8.5" />
  </svg>
);

const menus = [
  {
    className: 'w-[195px]',
    divided: true,
    items: [
      { label: 'Txistu', icon: <Check /> },
      { label: 'SoundFont-ak', icon: <Check />, active: true, sub: true },
      { label: 'Get more sounds', icon: <External /> },
    ],
  },
  {
    className: 'mt-[33px] w-[178px]',
    items: [
      { label: 'MS Basic', sub: true },
      { label: 'txistu', icon: <Check />, active: true, sub: true },
    ],
  },
  {
    className: 'mt-[65px] w-[220px]',
    divided: true,
    items: [{ label: 'Choose automatically' }, { label: 'Bank 1', icon: <Check />, active: true, sub: true }],
  },
  {
    className: 'mt-[98px] w-[178px]',
    items: [{ label: 'Txistu', icon: <Check />, active: true }, { label: 'Silbote' }],
  },
];

const SoundMenus = () => (
  <div className="absolute top-[82px] left-[175px] z-10 flex items-start">
    {menus.map((menu, i) => (
      <ul
        key={i}
        role="menu"
        className={`rounded-[3px] border border-[#cdd0d5] bg-[#f5f5f5] py-0.5 shadow-[0_3px_6px_rgba(0,0,0,0.18)] ${menu.className} ${menu.divided ? 'divide-y divide-[#cdd0d5]' : ''}`}
      >
        {menu.items.map((item) => (
          <li key={item.label} role="none">
            <button role="menuitem" className={`flex h-8 w-full items-center pr-2.5 pl-3 ${item.active ? 'bg-[#b2d2ef]' : ''}`}>
              <span className="w-[27px]">{item.icon}</span>
              <span className="flex-1 text-left">{item.label}</span>
              {item.sub && <Triangle />}
            </button>
          </li>
        ))}
      </ul>
    ))}
  </div>
);

const Mixer = () => (
  <section className="relative flex shrink-0 flex-col border-t border-[#cdd0d5] pb-8">
    <div className="flex h-[35px]">
      <div className="flex w-[115px] items-center justify-center gap-2">
        <h2 className="font-semibold">Nahasgailua</h2>
        <button aria-label="Mixer menu">
          <Dots />
        </button>
      </div>
      <div className="flex-1 border-b border-l border-[#cdd0d5] bg-[#e5e8ed]" />
    </div>
    <div className="mt-3 flex border-b border-[#cdd0d5]">
      <div className="flex w-[99px] flex-col border-r border-[#cdd0d5] pt-2 pr-3 text-right">
        <div className="h-[26px] leading-[26px]">Soinua</div>
        <div className="mt-2 h-6 leading-6">Audio FX</div>
        <div className="mt-2 h-6 leading-6">Aux sends</div>
        <div className="mt-2 h-8 leading-8">Mugimend...</div>
        <div className="mt-auto h-[22px] leading-[22px]">Izena</div>
      </div>
      {channels.map((channel) => (
        <Channel key={channel.name} channel={channel} />
      ))}
    </div>
    <SoundMenus />
  </section>
);

/* ---------- Numbered callouts ---------- */

const callouts = [
  { n: 1, x: 241.5, y: 596.5, shaft: 'M231 615L206 716', head: '195,711.5 214.5,716.5 198.5,742' },
  { n: 2, x: 423, y: 702, shaft: 'M411 718L366 785', head: '357.3,779.3 372.7,790.7 349.3,808' },
  { n: 3, x: 612.7, y: 772, shaft: 'M600 789L558 819', head: '551.3,811.3 563.3,826.7 534.7,835' },
  { n: 4, x: 852, y: 805, shaft: 'M835 817L768 853', head: '762,845 772.3,862.3 742.7,867' },
  { n: 5, x: 960, y: 796.7, shaft: 'M949 815L935 838', head: '926,834 943.3,843.3 921.3,863' },
];

const Callouts = () => (
  <svg width="1006" height="1120" viewBox="0 0 1006 1120" className="pointer-events-none absolute top-0 left-0 z-20">
    {callouts.map((c) => (
      <g key={c.n}>
        <path d={c.shaft} stroke="#f00" strokeWidth="5.5" />
        <polygon points={c.head} fill="#f00" />
        <circle cx={c.x} cy={c.y} r="21.3" fill="#000" />
        <circle cx={c.x} cy={c.y} r="20.2" fill="#fff" />
        <circle cx={c.x} cy={c.y} r="19.5" fill="#300" />
        <circle cx={c.x} cy={c.y} r="18.9" fill="#f00" />
        <text x={c.x} y={c.y + 7.5} fontSize="20" fontWeight="700" textAnchor="middle" fill="#fff">{c.n}</text>
      </g>
    ))}
  </svg>
);

// Strip of the desktop that shows left of the window
const Desktop = () => (
  <div className="flex w-[3px] shrink-0 flex-col overflow-hidden bg-[#0d0d2b]">
    <div className="h-[757px] bg-[#f2f2f3]">
      <svg width="3" height="757" viewBox="0 0 3 757" stroke="#b9bbbf">
        <path d="M0 3.5h3M0 10.5h3M0 42.5h3M0 50.5h3M0 82.5h3M0 90.5h3M0 123.5h3M0 164.5h3M0 470.5h3" />
        <path d="M0 131.5h3M0 650.5h3" stroke="#3daee9" />
      </svg>
    </div>
    <svg width="3" height="363" viewBox="0 0 3 363" fill="#f2e018">
      {[0, 21, 42, 63, 84, 105].map((y) => <path key={y} d={`M0 ${y}h3v4l-3 2Z`} />)}
      {[127, 190, 253, 316].map((y) => (
        <g key={y}>
          <circle cx="2" cy={y} r="4.5" />
          <circle cx="3" cy={y} r="2" fill="#0d0d2b" />
          <path d={`M2 ${y + 18}h1v4h-1ZM2 ${y + 26}h1v4h-1Z`} fill="#a01060" />
        </g>
      ))}
    </svg>
  </div>
);

const App = () => (
  <div className="relative flex h-screen overflow-hidden bg-[#0d0d2b] font-['Noto_Sans',sans-serif] text-[12px] leading-4 text-[#14153a]">
    <Desktop />
    <div className="mb-[3px] flex min-w-0 flex-1 flex-col rounded-bl-[3px] border-b border-l border-[#77777b] bg-[#f5f5f5] pl-1">
      <div className="flex h-[4px] shrink-0 border-b border-[#cdd0d5]">
        <div className="ml-[65px] h-[3px] w-[85px] bg-[#70aeeb]" />
      </div>
      <Toolbar />
      <div className="flex min-h-0 flex-1">
        <InstrumentsPanel />
        <ScoreView />
      </div>
      <Mixer />
    </div>
    <Callouts />
  </div>
);

export default App;
